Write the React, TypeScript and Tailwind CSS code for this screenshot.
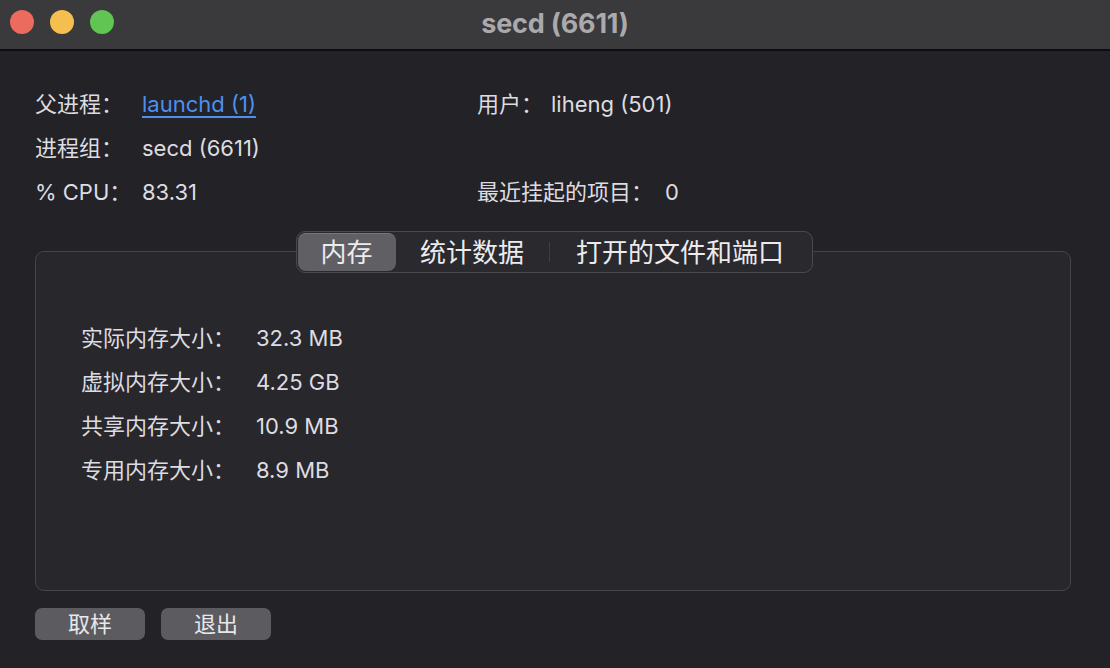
import React from "react";

const font = {
  fontFamily: '"Inter", "Noto Sans CJK SC", sans-serif',
};

function InfoRow({ label, value, valueClass = "" }: { label: string; value: React.ReactNode; valueClass?: string }) {
  return (
    <div className="flex h-[44px] items-center">
      <span className="w-[107px] shrink-0">{label}</span>
      <span className={valueClass}>{value}</span>
    </div>
  );
}

const memory = [
  ["实际内存大小：", "32.3 MB"],
  ["虚拟内存大小：", "4.25 GB"],
  ["共享内存大小：", "10.9 MB"],
  ["专用内存大小：", "8.9 MB"],
];

export default function App() {
  return (
    <div
      className="flex h-[668px] w-[1110px] flex-col overflow-hidden bg-[#232227] text-[22px] text-[#dddce0]"
      style={font}
    >
      {/* title bar */}
      <div className="relative flex h-[51px] shrink-0 items-center justify-center border-b-2 border-[#0e0e10] bg-[#3a393c]">
        <div className="absolute left-[10px] top-[10px] flex gap-[16px]">
          <span className="h-[24px] w-[24px] rounded-full bg-[#ec6a5e]" />
          <span className="h-[24px] w-[24px] rounded-full bg-[#f4bf4f]" />
          <span className="h-[24px] w-[24px] rounded-full bg-[#61c554]" />
        </div>
        <span className="text-[27px] font-bold tracking-[-0.2px] text-[#aaaaac]">secd (6611)</span>
      </div>

      <div className="flex flex-1 flex-col pl-[35px] pr-[39px] pt-[31px]">
        {/* info */}
        <div className="flex">
          <div className="w-[442px]">
            <InfoRow
              label="父进程："
              value="launchd (1)"
              valueClass="text-[#4d90f0] underline underline-offset-[4px] decoration-[1.5px]"
            />
            <InfoRow label="进程组：" value="secd (6611)" />
            <InfoRow label="% CPU：" value="83.31" />
          </div>
          <div>
            <div className="flex h-[44px] items-center">
              <span className="w-[74px]">用户：</span>
              <span>liheng (501)</span>
            </div>
            <div className="h-[44px]" />
            <div className="flex h-[44px] items-center">
              <span className="w-[188px]">最近挂起的项目：</span>
              <span>0</span>
            </div>
          </div>
        </div>

        {/* tabs + panel */}
        <div className="mt-[17px] flex flex-col">
          <div className="relative z-10 flex justify-center pl-[2px]">
            <div className="flex h-[42px] items-stretch rounded-[9px] border border-[#4a494e] bg-[#2a292e] p-px text-[26px] text-[#ecebee]">
              <div className="flex w-[98px] items-center justify-center rounded-[8px] border-t border-[#78777c] bg-[#605f64]">
                内存
              </div>
              <div className="flex w-[153px] items-center justify-center">统计数据</div>
              <div className="my-[9px] w-px bg-[#3e3d42]" />
              <div className="flex w-[261px] items-center justify-center">打开的文件和端口</div>
            </div>
          </div>
          <div className="-mt-[22px] h-[340px] rounded-[9px] border border-[#45444a] bg-[#28272c] pl-[45px] pt-[64px]">
            {memory.map(([k, v]) => (
              <div key={k} className="flex h-[44px] items-center">
                <span className="w-[175px] shrink-0">{k}</span>
                <span>{v}</span>
              </div>
            ))}
          </div>
        </div>

        {/* buttons */}
        <div className="mt-[17px] flex gap-[16px]">
          <button className="h-[32px] w-[110px] rounded-[7px] bg-[#5c5b60] text-[22px] text-[#e8e7ea]">取样</button>
          <button className="h-[32px] w-[110px] rounded-[7px] bg-[#5c5b60] text-[22px] text-[#e8e7ea]">退出</button>
        </div>
      </div>
    </div>
  );
}
